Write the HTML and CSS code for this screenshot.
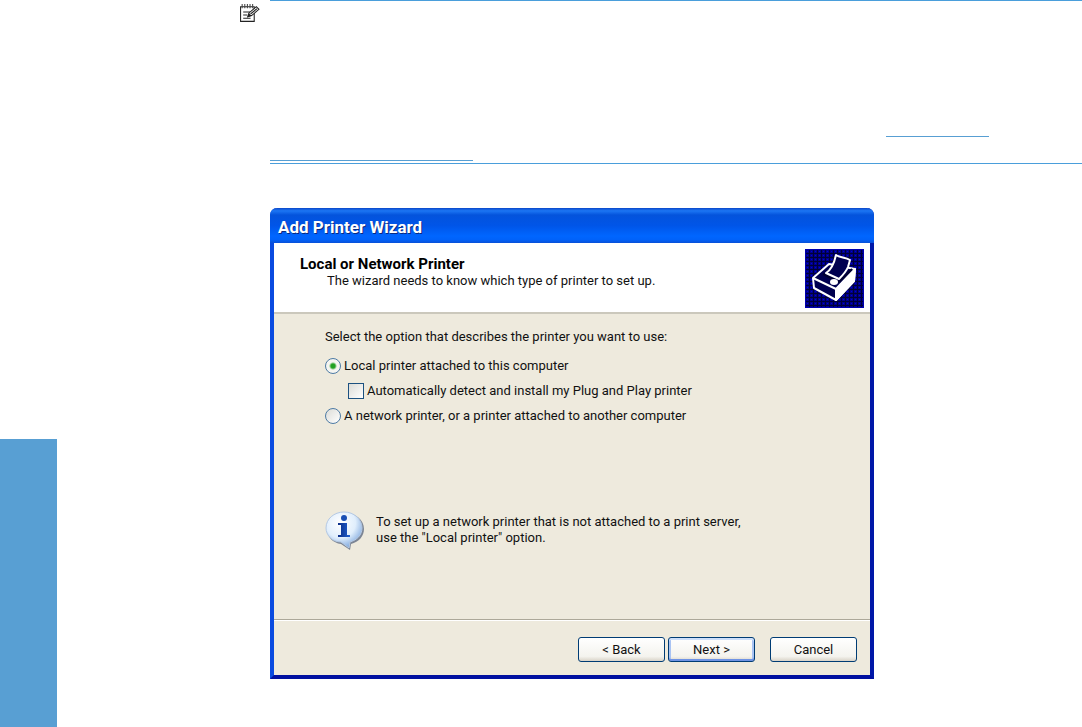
FILE: index.html
```html
<!DOCTYPE html>
<html lang="en">
<head>
  <meta charset="UTF-8" />
  <meta name="viewport" content="width=device-width, initial-scale=1.0"/>
  <title>Add Printer Wizard</title>
  <link rel="stylesheet" href="styles.css">
</head>
<body>
  <aside class="side-tab"></aside>
  <main class="content">
    <section class="note">
      <svg class="note-icon" width="21" height="21" viewBox="0 0 20 20">
        <path d="M1.500 3.500h13v14h-13z" fill="#fff" stroke="#222"/>
        <path d="M3 1v4M5.500 1v4M8 1v4M10.500 1v4M13 1v4" stroke="#444"/>
        <path d="M4 8.500h7M4 11.500h4M4 14.500h7" stroke="#222"/>
        <path d="M8.500 13l1-3.500 7-6 2.500 2.500-7 6z" fill="#fff" stroke="#222"/>
        <path d="M8.500 13l1-2.500 1.500 1.500zM11 10.500l6-5" fill="#222" stroke="#222"/>
      </svg>
      <div class="note-body">
        <span class="rule rule-right"></span>
        <span class="rule rule-left"></span>
      </div>
    </section>

    <form class="wizard" id="wizardForm">
      <h1 class="title-bar">Add Printer Wizard</h1>

      <header class="wizard-header">
        <div>
          <h2>Local or Network Printer</h2>
          <p>The wizard needs to know which type of printer to set up.</p>
        </div>
        <svg class="printer-icon" width="59" height="59" viewBox="0 0 59 59">
          <defs>
            <pattern id="dots" width="4" height="4" patternUnits="userSpaceOnUse">
              <rect width="4" height="4" fill="#000088"/>
              <path d="M0 0h4v1h-4zM0 1h1v3h-1z" fill="#000038"/>
              <path d="M2 2h1v1h-1z" fill="#0000d8"/>
            </pattern>
          </defs>
          <rect width="59" height="59" fill="url(#dots)"/>
          <rect x="0.500" y="0.500" width="58" height="58" fill="none" stroke="#0000b0"/>
          <g stroke-linejoin="round" stroke="#fff" stroke-width="2">
            <path d="M8 29L24 15l26 5-1 12-18 19L9 39z" fill="#000050"/>
            <path d="M31 40l19-20-1 12-18 19z" fill="#fff"/>
            <path d="M8 29l23 11v11" fill="none"/>
            <path d="M18 25l16 8 13-13" fill="none" stroke="#000030"/>
            <path d="M21 24c5-3 8-9 10-18 4 3 9 2 14 5l-2 7c-2 5-5 8-9 12z" fill="#000050"/>
          </g>
          <ellipse cx="29" cy="33" rx="4" ry="3" fill="#fff"/>
        </svg>
      </header>

      <div class="wizard-body">
        <p class="prompt">Select the option that describes the printer you want to use:</p>
        <label class="option">
          <input type="radio" name="printer" value="local" checked>
          Local printer attached to this computer
        </label>
        <label class="option sub-option">
          <input type="checkbox" name="detect">
          Automatically detect and install my Plug and Play printer
        </label>
        <label class="option">
          <input type="radio" name="printer" value="network">
          A network printer, or a printer attached to another computer
        </label>

        <div class="info">
          <svg width="40" height="40" viewBox="0 0 40 40">
            <defs>
              <radialGradient id="bubble" cx="40%" cy="30%" r="70%">
                <stop offset="0" stop-color="#fff"/>
                <stop offset="0.6" stop-color="#e0eefc"/>
                <stop offset="1" stop-color="#86ade0"/>
              </radialGradient>
              <linearGradient id="letter" x1="0" x2="1">
                <stop offset="0" stop-color="#0a2c86"/>
                <stop offset="1" stop-color="#2060d0"/>
              </linearGradient>
            </defs>
            <path d="M20 2c11 0 19 7 19 16 0 7-5 13-13 15l-1 6-9-6C8 32 2 26 2 18 2 9 10 2 20 2z" fill="#5f6c82" opacity="0.800"/>
            <path d="M19 1c10 0 18 7 18 16 0 7-5 12-12 14l-1 6-8-6C7 31 1 24 1 17 1 8 9 1 19 1z" fill="url(#bubble)" stroke="#b4c9e4"/>
            <circle cx="19" cy="7" r="3" fill="#1a4fb4"/>
            <path d="M13 12h9v12h3v2H13v-2h3V14h-3z" fill="url(#letter)"/>
          </svg>
          <p>To set up a network printer that is not attached to a print server,<br>use the "Local printer" option.</p>
        </div>
      </div>

      <footer class="wizard-footer">
        <button type="button">&lt; Back</button>
        <button type="submit" class="default">Next &gt;</button>
        <button type="button" class="cancel">Cancel</button>
      </footer>
    </form>
  </main>
</body>
</html>
```
FILE: styles.css
```css
* {
  box-sizing: border-box;
}

body {
  display: flex;
  min-height: 100vh;
  margin: 0;
  background: white;
  color: #111;
  font-family: Roboto, "Liberation Sans", sans-serif;
  font-size: 13px;
  line-height: 16px;
}

h1, h2, p {
  margin: 0;
}

.side-tab {
  flex: 0 0 57px;
  align-self: flex-end;
  height: 288px;
  background: #589fd3;
}

.content {
  flex: 1;
  padding-left: 182px;
}

.note {
  display: flex;
  gap: 10px;
}

.note-icon {
  flex: none;
  margin-top: 3px;
}

.note-body {
  flex: 1;
  display: flex;
  flex-direction: column;
  justify-content: flex-end;
  gap: 23px;
  height: 164px;
  padding-bottom: 2px;
  border-top: 1px solid #4a9edb;
  border-bottom: 1px solid #4a9edb;
}

.rule {
  height: 1px;
  background: #589fd3;
}

.rule-right {
  align-self: flex-end;
  width: 103px;
  margin-right: 93px;
}

.rule-left {
  width: 203px;
}

.wizard {
  max-width: 604px;
  margin: 44px 0 0 31px;
  background: #eeeadd;
  border: 4px solid #0a4be0;
  border-color: #0a4be0 #0018a8 #0010a0 #0a4be0;
  border-top: 0;
  border-radius: 7px 7px 0 0;
}

.title-bar {
  height: 35px;
  margin: 0 -4px;
  padding: 0 8px;
  background: linear-gradient(#0a46c8, #1c76f4 8%, #0453dc 20%, #0055e8 50%, #0066ff 80%, #0062fa 90%, #0850d8);
  border-radius: 7px 7px 0 0;
  color: white;
  font-size: 17px;
  line-height: 39px;
  text-shadow: 1px 1px #0a2a80;
}

.wizard-header {
  display: flex;
  justify-content: space-between;
  height: 71px;
  padding: 6px 6px 0 26px;
  background: white;
  border-bottom: 2px solid #cbc8bc;
}

.wizard-header h2 {
  margin-top: 6px;
  color: black;
  font-size: 15px;
  line-height: 18px;
}

.wizard-header p {
  padding-left: 27px;
}

.wizard-body {
  height: 305px;
  padding: 15px 24px 0 51px;
}

.prompt {
  margin-bottom: 13px;
}

.option {
  display: flex;
  align-items: center;
  gap: 3px;
  margin-bottom: 9px;
}

.sub-option {
  padding-left: 23px;
}

.option input {
  appearance: none;
  flex: none;
  width: 16px;
  height: 16px;
  margin: 0;
  background: linear-gradient(135deg, #dcdcd7, white);
  border: 1px solid #1c5180;
}

.option input[type="radio"] {
  border-color: #4d7ba5;
  border-radius: 50%;
}

.option input[type="radio"]:checked {
  background: radial-gradient(circle, #21a121 0 2px, #f5f5f1 4px);
}

.info {
  display: flex;
  gap: 11px;
  margin-top: 87px;
}

.info p {
  padding-top: 3px;
}

.wizard-footer {
  display: flex;
  justify-content: flex-end;
  gap: 3px;
  height: 56px;
  padding: 17px 13px 0;
  border-top: 1px solid #aca899;
  box-shadow: inset 0 1px white;
}

.wizard-footer button {
  width: 87px;
  height: 25px;
  padding: 0;
  background: linear-gradient(white, #f4f3ee 80%, #d9d3c8);
  border: 1px solid #003c74;
  border-radius: 3px;
  color: #111;
  font: inherit;
}

.wizard-footer .default {
  box-shadow: inset 0 2px #cee0fb, inset 0 -2px #6f93e4, inset 2px 0 #a9c3f3, inset -2px 0 #a9c3f3;
}

.wizard-footer .cancel {
  margin-left: 12px;
}
```
